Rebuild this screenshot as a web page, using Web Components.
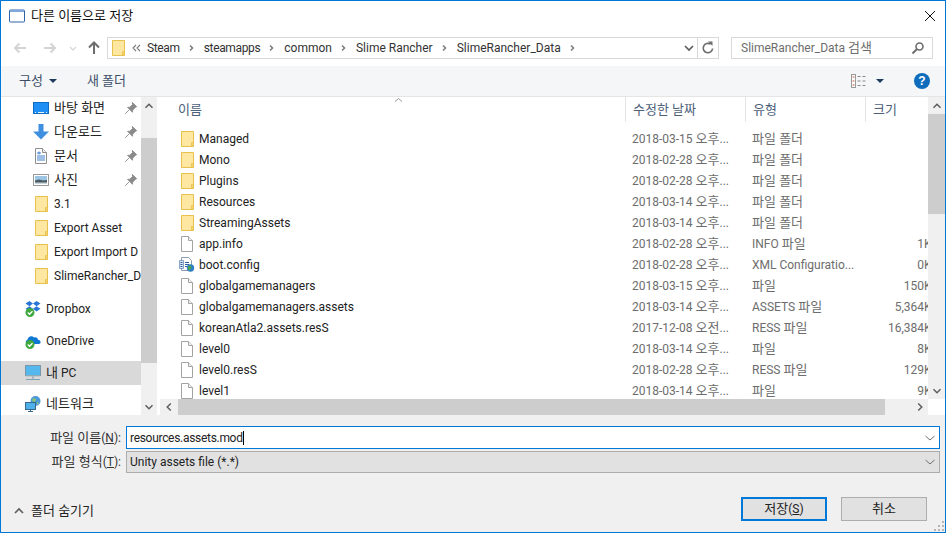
<!DOCTYPE html>
<html lang="ko">
<head>
<meta charset="utf-8">
<title>다른 이름으로 저장</title>
<style>
    html, body { margin: 0; padding: 0; background: #fff; }
    body { font: 12px Roboto, "Noto Sans CJK KR", sans-serif; }
</style>
</head>
<body>
<save-dialog></save-dialog>
<script>
    // every icon of the dialog, drawn in a 16x16 box unless a size is given
    const ICONS = {
        folder: '<path d="M.5 .5h12v15H.5z" fill="#fee7a0" stroke="#e8c04e"/><path d="M10.500 15v-3.500h2V15z" fill="#f7d56e" stroke="#e8c04e" stroke-width=".8"/>',
        file: '<path d="M.5 .5h7l4 4v11H.5z" fill="#fff" stroke="#a3a3a3"/><path d="M7.500 .5v4h4" fill="#f2f2f2" stroke="#a3a3a3"/>',
        config: '<path d="M2.500 .5h7l3 3v10h-10z" fill="#fff" stroke="#8d9bb0"/><path d="M.5 3.500h4v8h-4z" fill="#dbe7f6" stroke="#5b7fb0" stroke-width=".7"/><path d="M1.500 5.500h2M1.500 7.500h2M1.500 9.500h2M6 5.500h4M6 7.500h4M6 9.500h3" stroke="#2c5c9c"/><circle cx="11.500" cy="11" r="3.700" fill="#2f7fc4"/><path d="M9 9.500l2.500-1 1 2-2 3-1.500-1.500z" fill="#4fa648"/>',
        desktop: '<rect x=".5" y="2.500" width="15" height="11" fill="#1e90f5" stroke="#0d6cc0"/><path d="M2 12.500h1M13 12.500h1M5 12.500h6" stroke="#e4f3ff"/>',
        download: '<path d="M5.500 0h5v7.500H16L8 15.500 0 7.500h5.500z" fill="#3f8fe0"/>',
        docs: '<path d="M2.500 .5h7l4 4v11h-11z" fill="#fff" stroke="#8f8f8f"/><path d="M9.500 .5v4h4" fill="#eee" stroke="#8f8f8f"/><path d="M6 3.500v3M4 5h4M4 8h8M4 10h8M4 12h8" stroke="#3b80c8"/>',
        pictures: '<rect x=".5" y="2.500" width="15" height="11" fill="#fff" stroke="#9a9a9a"/><rect x="2" y="4" width="12" height="8" fill="#9cc4e4"/><path d="M2 8.500l4-1 4 1 4-.5V12H2z" fill="#4a5a60"/><path d="M2 10.500h12V12H2z" fill="#c9d6dc"/>',
        pin: '<path d="M9.500 1.500l5 5-1.400.6-3.200 3.400-.2 2.400-5.600-5.600 2.400-.2 3.400-3.200zM5.800 10.200L1.500 14.500" fill="#8a8a8a" stroke="#8a8a8a"/>',
        dropbox: '<path d="M4.500 0L.5 2.600l4 2.600 3.500-2.600zM11.500 0L8 2.600l3.500 2.600 4-2.600zM.5 7.800l4 2.600L8 7.800 4.500 5.200zM15.500 7.800l-4 2.600L8 7.800l3.500-2.600z" fill="#2a75d8"/><circle cx="5" cy="11.500" r="4.500" fill="#3fa83f"/><path d="M2.800 11.500l1.700 1.700 3-3" fill="none" stroke="#fff" stroke-width="1.400"/>',
        onedrive: '<path d="M3 11c-2.600 0-3-3.400-.7-4C3 3.600 6.500 2.200 9 4.400c2.200-.8 3.800.4 4 2.300 2.900.2 3.700 3.900.8 4.300z" fill="#0f78d4"/><circle cx="5" cy="11.500" r="4.500" fill="#3fa83f"/><path d="M2.800 11.500l1.700 1.700 3-3" fill="none" stroke="#fff" stroke-width="1.400"/>',
        pc: '<rect x=".5" y=".5" width="15" height="10" fill="#54b8ee" stroke="#7b96a8"/><path d="M1 10.500h14v1H1z" fill="#a7bcc9"/><path d="M7 11.500h2v2H7z" fill="#9ab"/><path d="M1 14.500h14" stroke="#7f9fb5"/>',
        network: '<circle cx="10.500" cy="5" r="5" fill="#4c98d8"/><path d="M8 2l3 1-1 3-3-1zM12 6l2 1-2 2z" fill="#8cc46a"/><rect x=".5" y="6.500" width="10" height="7" fill="#4fb0ea" stroke="#37688f"/><path d="M3 15.500h5" stroke="#37688f"/><path d="M5 13.500h1v2H5z" fill="#37688f"/>',
        back: '<path d="M14 8H3M7.500 3.500L3 8l4.500 4.500" fill="none" stroke="#d4d4d4" stroke-width="2"/>',
        forward: '<path d="M2 8h11M8.500 3.500L13 8l-4.500 4.500" fill="none" stroke="#d4d4d4" stroke-width="2"/>',
        up: '<path d="M8 14V3M3 7.500L8 2.500l5 5" fill="none" stroke="#6d6d6d" stroke-width="2"/>',
        chevDown: '<path d="M4 6l4 4 4-4" fill="none" stroke="#5e5e5e" stroke-width="1.700"/>',
        chevUp: '<path d="M4 10l4-4 4 4" fill="none" stroke="#5e5e5e" stroke-width="1.700"/>',
        chevLeft: '<path d="M10 4L6 8l4 4" fill="none" stroke="#5e5e5e" stroke-width="1.700"/>',
        chevRight: '<path d="M6 4l4 4-4 4" fill="none" stroke="#5e5e5e" stroke-width="1.700"/>',
        thinDown: '<path d="M3.500 6L8 10l4.500-4" fill="none" stroke="#707070"/>',
        paleDown: '<path d="M5 7l3 3 3-3" fill="none" stroke="#d4d4d4" stroke-width="1.200"/>',
        caret: '<path d="M4 6h8L8 10z" fill="#1f3a5f"/>',
        crumb: '<path d="M6 5.500L8.500 8 6 10.500" fill="none" stroke="#7b7b7b" stroke-width="1.500"/>',
        crumbs: '<path d="M8 5L5 8l3 3M12 5L9 8l3 3" fill="none" stroke="#7b7b7b" stroke-width="1.100"/>',
        refresh: '<path d="M12.600 8.500a4.700 4.700 0 1 1-2-4.300" fill="none" stroke="#6d6d6d" stroke-width="1.600"/><path d="M8 1.500h4.500V6z" fill="#6d6d6d"/>',
        search: '<circle cx="9.500" cy="6.500" r="3.500" fill="none" stroke="#6d6d6d" stroke-width="1.600"/><path d="M7 9l-4.500 4.500" stroke="#6d6d6d" stroke-width="2"/>',
        close: '<path d="M3 3l10 10M13 3L3 13" stroke="#111"/>',
        window: '<rect x=".5" y="2" width="15" height="12" rx="1" fill="#fff" stroke="#2d62a8"/><path d="M1 3h14" stroke="#7fa8dc" stroke-width="2"/>',
        views: '<rect x=".5" y="1.500" width="4" height="13" fill="#fff" stroke="#9a9a9a"/><path d="M1.500 4h2M1.500 8h2M1.500 12h2" stroke="#c25b3f"/><path d="M6.500 3.500h3M11.500 3.500h3M6.500 8h3M11.500 8h3M6.500 12.500h3M11.500 12.500h3" stroke="#8a8a8a"/>',
        help: '<circle cx="8" cy="8" r="8" fill="#0f6cbd"/><text x="8" y="12.300" text-anchor="middle" font-family="Liberation Sans, sans-serif" font-weight="700" font-size="12" fill="#fff">?</text>',
        sort: '<path d="M1 4.500l3.500-3 3.500 3" fill="none" stroke="#9a9a9a"/>',
        grip: '<path d="M8 0h2v2H8zM4 4h2v2H4zM8 4h2v2H8zM0 8h2v2H0zM4 8h2v2H4zM8 8h2v2H8z" fill="#b5b5b5"/>'
    };

    // hangul is set a size up, the way Malgun Gothic sits next to its latin
    class KoText extends HTMLElement {
        constructor() {
            super();
            this.attachShadow({mode: 'open'}).innerHTML = `<style>:host { font-size: 13px; line-height: 0; }</style><slot></slot>`;
        }
    }
    customElements.define('ko-t', KoText);
    const ko = s => s.replace(/[가-힣]+(?: [가-힣]+)*/g, m => `<ko-t>${m}</ko-t>`);

    class UiIcon extends HTMLElement {
        connectedCallback() {
            const size = this.getAttribute('size') || 16;
            const box = this.getAttribute('box') || 16;
            this.attachShadow({mode: 'open'}).innerHTML = `
                <style>:host { display: inline-flex; flex: none; } svg { display: block; }</style>
                <svg width="${size}" height="${size}" viewBox="0 0 ${box} ${box}">${ICONS[this.getAttribute('name')]}</svg>`;
        }
    }
    customElements.define('ui-icon', UiIcon);

    class TitleBar extends HTMLElement {
        connectedCallback() {
            this.attachShadow({mode: 'open'}).innerHTML = `
                <style>
                    :host { display: flex; align-items: center; height: 29px; padding: 0 7px 0 8px; color: #111; }
                    .label { margin-left: 6px; flex: 1; }
                </style>
                <ui-icon name="window"></ui-icon>
                <span class="label"><slot></slot></span>
                <ui-icon name="close"></ui-icon>`;
        }
    }
    customElements.define('title-bar', TitleBar);

    class NavBar extends HTMLElement {
        connectedCallback() {
            const crumbs = ['Steam', 'steamapps', 'common', 'Slime Rancher', 'SlimeRancher_Data'];
            this.attachShadow({mode: 'open'}).innerHTML = `
                <style>
                    :host { display: flex; align-items: center; height: 36px; padding: 0 12px 0 11px; box-sizing: border-box; color: #333; }
                    .arrows { display: flex; align-items: center; width: 95px; }
                    .box { display: flex; align-items: center; height: 22px; box-sizing: border-box; border: 1px solid #d9d9d9; }
                    .path { width: 612px; padding-left: 4px; }
                    .crumbs { display: flex; align-items: center; flex: 1; margin-left: 3px; }
                    .crumbs ui-icon { margin: 0 4px; }
                    .crumbs span:nth-of-type(-n+2) { letter-spacing: -.35px; }
                    .tail { display: flex; align-items: center; justify-content: center; width: 20px; height: 100%; border-left: 1px solid #d9d9d9; }
                    .search { width: 202px; margin-left: 12px; padding: 0 6px 0 9px; color: #6d6d6d; justify-content: space-between; }
                </style>
                <div class="arrows">
                    <ui-icon name="back"></ui-icon>
                    <ui-icon name="forward" style="margin-left:14px"></ui-icon>
                    <ui-icon name="paleDown" style="margin-left:7px"></ui-icon>
                    <ui-icon name="up" style="margin-left:5px"></ui-icon>
                </div>
                <div class="box path">
                    <ui-icon name="folder"></ui-icon>
                    <ui-icon name="crumbs"></ui-icon>
                    <div class="crumbs">${crumbs.map(c => `<span>${c}</span><ui-icon name="crumb"></ui-icon>`).join('')}</div>
                    <ui-icon name="chevDown"></ui-icon>
                    <div class="tail"><ui-icon name="refresh"></ui-icon></div>
                </div>
                <div class="box search"><span>SlimeRancher_Data ${ko('검색')}</span><ui-icon name="search"></ui-icon></div>`;
        }
    }
    customElements.define('nav-bar', NavBar);

    class CmdBar extends HTMLElement {
        connectedCallback() {
            this.attachShadow({mode: 'open'}).innerHTML = `
                <style>
                    :host { display: flex; align-items: center; height: 31px; padding: 0 15px 0 18px; box-sizing: border-box; background: #f5f6f7; border-bottom: 1px solid #e5e5e5; color: #3c4f68; }
                    .new { margin-left: 26px; flex: 1; }
                    .help { margin-left: 26px; }
                </style>
                <span>${ko('구성')}</span><ui-icon name="caret" style="margin-left:2px"></ui-icon>
                <span class="new">${ko('새 폴더')}</span>
                <ui-icon name="views"></ui-icon>
                <ui-icon name="caret" style="margin-left:5px"></ui-icon>
                <ui-icon name="help" class="help"></ui-icon>`;
        }
    }
    customElements.define('cmd-bar', CmdBar);

    class ScrollBar extends HTMLElement {
        // start / thumb are pixel lengths, a flat Win10 scrollbar in either direction
        connectedCallback() {
            const h = this.hasAttribute('horizontal');
            const [a, b] = h ? ['chevLeft', 'chevRight'] : ['chevUp', 'chevDown'];
            const start = this.getAttribute('start');
            const thumb = this.getAttribute('thumb');
            this.attachShadow({mode: 'open'}).innerHTML = `
                <style>
                    :host { display: flex; flex: none; flex-direction: ${h ? 'row' : 'column'}; background: #f0f0f0; box-sizing: border-box; }
                    .track { flex: 1; min-width: 0; min-height: 0; display: flex; flex-direction: ${h ? 'row' : 'column'}; padding-${h ? 'left' : 'top'}: ${start}px; }
                    .thumb { ${h ? 'width' : 'height'}: ${thumb}px; ${h ? 'height' : 'width'}: 100%; background: #cdcdcd; }
                    .end { display: flex; align-items: center; justify-content: center; flex: none; ${h ? 'width' : 'height'}: 17px; }
                </style>
                <div class="end"><ui-icon name="${a}" size="14"></ui-icon></div>
                <div class="track"><div class="thumb"></div></div>
                <div class="end"><ui-icon name="${b}" size="14"></ui-icon></div>`;
        }
    }
    customElements.define('scroll-bar', ScrollBar);

    class NavItem extends HTMLElement {
        connectedCallback() {
            const icon = this.getAttribute('icon');
            const pin = this.hasAttribute('pinned') ? '<ui-icon name="pin" size="14" class="pin"></ui-icon>' : '';
            this.attachShadow({mode: 'open'}).innerHTML = `
                <style>
                    :host { display: flex; align-items: center; height: 24px; padding-left: 32px; box-sizing: border-box; color: #222; white-space: nowrap; overflow: hidden; }
                    :host([root]) { padding-left: 24px; }
                    :host([selected]) { background: #d9d9d9; }
                    .label { margin-left: 5px; flex: 1; overflow: hidden; }
                    .pin { margin-right: 3px; }
                    .narrow { margin: 0 -2px 0 2px; }
                </style>
                <ui-icon name="${icon}" class="${icon === 'folder' ? 'narrow' : ''}"></ui-icon>
                <span class="label"><slot></slot></span>${pin}`;
        }
    }
    customElements.define('nav-item', NavItem);

    class NavPane extends HTMLElement {
        connectedCallback() {
            this.attachShadow({mode: 'open'}).innerHTML = `
                <style>
                    :host { display: block; flex: none; width: 140px; overflow: hidden; }
                    .list { margin-top: -1px; }
                    .g1 { margin-top: 9px; }
                    .g2 { margin-top: 8px; }
                    .g3 { margin-top: 7px; }
                </style>
                <div class="list">
                    <nav-item icon="desktop" pinned>${ko('바탕 화면')}</nav-item>
                    <nav-item icon="download" pinned>${ko('다운로드')}</nav-item>
                    <nav-item icon="docs" pinned>${ko('문서')}</nav-item>
                    <nav-item icon="pictures" pinned>${ko('사진')}</nav-item>
                    <nav-item icon="folder">3.1</nav-item>
                    <nav-item icon="folder">Export Asset</nav-item>
                    <nav-item icon="folder">Export Import D</nav-item>
                    <nav-item icon="folder">SlimeRancher_D</nav-item>
                    <nav-item icon="dropbox" root class="g1">Dropbox</nav-item>
                    <nav-item icon="onedrive" root class="g2">OneDrive</nav-item>
                    <nav-item icon="pc" root selected class="g2">${ko('내')} PC</nav-item>
                    <nav-item icon="network" root class="g3">${ko('네트워크')}</nav-item>
                </div>`;
        }
    }
    customElements.define('nav-pane', NavPane);

    class FileRow extends HTMLElement {
        connectedCallback() {
            const a = n => this.getAttribute(n) || '';
            this.attachShadow({mode: 'open'}).innerHTML = `
                <style>
                    :host { display: grid; grid-template-columns: 472px 120px 120px 56px; height: 21px; align-items: center; color: #6d6d6d; white-space: nowrap; }
                    .name { display: flex; align-items: center; padding-left: 21px; color: #222; }
                    .name span { margin-left: 2px; }
                    .name ui-icon[name=config] { margin: 0 2px 0 -2px; }
                    .size { overflow: hidden; }
                    .size span { display: block; text-align: right; margin-right: -11px; }
                </style>
                <div class="name"><ui-icon name="${a('icon') || 'file'}"></ui-icon><span>${a('name')}</span></div>
                <div>${ko(a('date'))}</div><div>${ko(a('type'))}</div>
                <div class="size"><span>${a('size')}</span></div>`;
        }
    }
    customElements.define('file-row', FileRow);

    class FileList extends HTMLElement {
        connectedCallback() {
            const rows = [
                ['Managed', '2018-03-15 오후...', '파일 폴더', '', 'folder'],
                ['Mono', '2018-02-28 오후...', '파일 폴더', '', 'folder'],
                ['Plugins', '2018-02-28 오후...', '파일 폴더', '', 'folder'],
                ['Resources', '2018-03-14 오후...', '파일 폴더', '', 'folder'],
                ['StreamingAssets', '2018-03-14 오후...', '파일 폴더', '', 'folder'],
                ['app.info', '2018-02-28 오후...', 'INFO 파일', '1KB'],
                ['boot.config', '2018-02-28 오후...', 'XML Configuratio...', '0KB', 'config'],
                ['globalgamemanagers', '2018-03-15 오후...', '파일', '150KB'],
                ['globalgamemanagers.assets', '2018-03-14 오후...', 'ASSETS 파일', '5,364KB'],
                ['koreanAtla2.assets.resS', '2017-12-08 오전...', 'RESS 파일', '16,384KB'],
                ['level0', '2018-03-14 오후...', '파일', '8KB'],
                ['level0.resS', '2018-02-28 오후...', 'RESS 파일', '129KB'],
                ['level1', '2018-03-14 오후...', '파일', '9KB']
            ];
            this.attachShadow({mode: 'open'}).innerHTML = `
                <style>
                    :host { display: flex; flex: 1; min-width: 0; }
                    .main { flex: 1; min-width: 0; display: flex; flex-direction: column; margin-left: 3px; }
                    .head { display: grid; grid-template-columns: 465px 120px 120px 63px; height: 25px; color: #4c607a; flex: none; position: relative; }
                    .head div { display: flex; align-items: center; padding-left: 7px; border-left: 1px solid #e5e5e5; box-sizing: border-box; }
                    .head div:first-child { border-left: 0; padding-left: 18px; }
                    .sort { position: absolute; left: 234px; top: 0; }
                    .body { flex: 1; min-height: 0; overflow: hidden; padding-top: 6px; }
                    .side { display: flex; flex-direction: column; flex: none; width: 17px; }
                    .corner { height: 16px; flex: none; }
                    scroll-bar[vertical] { flex: 1; }
                    scroll-bar[horizontal] { height: 16px; }
                </style>
                <div class="main">
                    <div class="head">
                        <div>${ko('이름')}</div><div>${ko('수정한 날짜')}</div><div>${ko('유형')}</div><div>${ko('크기')}</div>
                        <ui-icon name="sort" size="9" box="9" class="sort"></ui-icon>
                    </div>
                    <div class="body">${rows.map(r => `<file-row name="${r[0]}" date="${r[1]}" type="${r[2]}" size="${r[3]}" icon="${r[4] || 'file'}"></file-row>`).join('')}</div>
                    <scroll-bar horizontal start="1" thumb="707"></scroll-bar>
                </div>
                <div class="side">
                    <scroll-bar vertical start="0" thumb="100"></scroll-bar>
                    <div class="corner"></div>
                </div>`;
        }
    }
    customElements.define('file-list', FileList);

    class FormRow extends HTMLElement {
        connectedCallback() {
            const focused = this.hasAttribute('focused');
            this.attachShadow({mode: 'open'}).innerHTML = `
                <style>
                    :host { display: flex; align-items: center; color: #222; }
                    .label { width: 120px; text-align: right; white-space: nowrap; color: #333; }
                    .field { display: flex; align-items: center; justify-content: space-between; margin-left: 5px; width: 814px; box-sizing: border-box; padding: 0 1px 0 3px; background: ${focused ? '#fff' : '#e1e1e1'}; border: 1px solid ${focused ? '#0078d7' : '#adadad'}; height: ${focused ? 23 : 22}px; }
                    .value { letter-spacing: ${focused ? '-.3px' : '0'}; }
                    .caret { display: inline-block; width: 1px; height: 14px; background: #000; vertical-align: -3px; }
                </style>
                <span class="label"><slot name="label"></slot></span>
                <div class="field"><span class="value"><slot></slot>${focused ? '<span class="caret"></span>' : ''}</span><ui-icon name="thinDown"></ui-icon></div>`;
        }
    }
    customElements.define('form-row', FormRow);

    class DlgButton extends HTMLElement {
        connectedCallback() {
            this.attachShadow({mode: 'open'}).innerHTML = `
                <style>
                    :host { display: flex; align-items: center; justify-content: center; width: 86px; height: 24px; box-sizing: border-box; background: #e1e1e1; border: 1px solid #adadad; color: #222; }
                    :host([primary]) { border: 2px solid #0078d7; }
                </style><slot></slot>`;
        }
    }
    customElements.define('dlg-button', DlgButton);

    class SaveForm extends HTMLElement {
        connectedCallback() {
            this.attachShadow({mode: 'open'}).innerHTML = `
                <style>
                    :host { display: flex; flex-direction: column; flex: none; height: 117px; padding-top: 11px; box-sizing: border-box; background: #f0f0f0; }
                    .fields { display: flex; flex-direction: column; gap: 2px; }
                    .foot { display: flex; align-items: center; margin-top: 24px; height: 24px; padding: 0 18px 0 10px; color: #222; }
                    .hide { display: flex; align-items: center; gap: 4px; flex: 1; padding-top: 4px; }
                    .foot dlg-button + dlg-button { margin-left: 14px; }
                    .grip { align-self: flex-end; margin: 0 1px 1px 0; }
                </style>
                <div class="fields">
                    <form-row focused><span slot="label">${ko('파일 이름')}(<u>N</u>):</span>resources.assets.mod</form-row>
                    <form-row><span slot="label">${ko('파일 형식')}(<u>T</u>):</span>Unity assets file (*.*)</form-row>
                </div>
                <div class="foot">
                    <div class="hide"><ui-icon name="chevUp"></ui-icon><span>${ko('폴더 숨기기')}</span></div>
                    <dlg-button primary>${ko('저장')}(<u>S</u>)</dlg-button>
                    <dlg-button>${ko('취소')}</dlg-button>
                </div>
                <ui-icon name="grip" size="10" box="10" class="grip"></ui-icon>`;
        }
    }
    customElements.define('save-form', SaveForm);

    class SaveDialog extends HTMLElement {
        connectedCallback() {
            this.attachShadow({mode: 'open'}).innerHTML = `
                <style>
                    :host { display: flex; flex-direction: column; width: 946px; height: 533px; box-sizing: border-box; border: 1px solid #0078d7; background: #fff; overflow: hidden; }
                    .main { display: flex; flex: 1; min-height: 0; }
                    .navscroll { width: 16px; }
                </style>
                <title-bar>${ko('다른 이름으로 저장')}</title-bar>
                <nav-bar></nav-bar>
                <cmd-bar></cmd-bar>
                <div class="main">
                    <nav-pane></nav-pane>
                    <scroll-bar class="navscroll" vertical start="24" thumb="225"></scroll-bar>
                    <file-list></file-list>
                </div>
                <save-form></save-form>`;
        }
    }
    customElements.define('save-dialog', SaveDialog);
</script>
</body>
</html>
